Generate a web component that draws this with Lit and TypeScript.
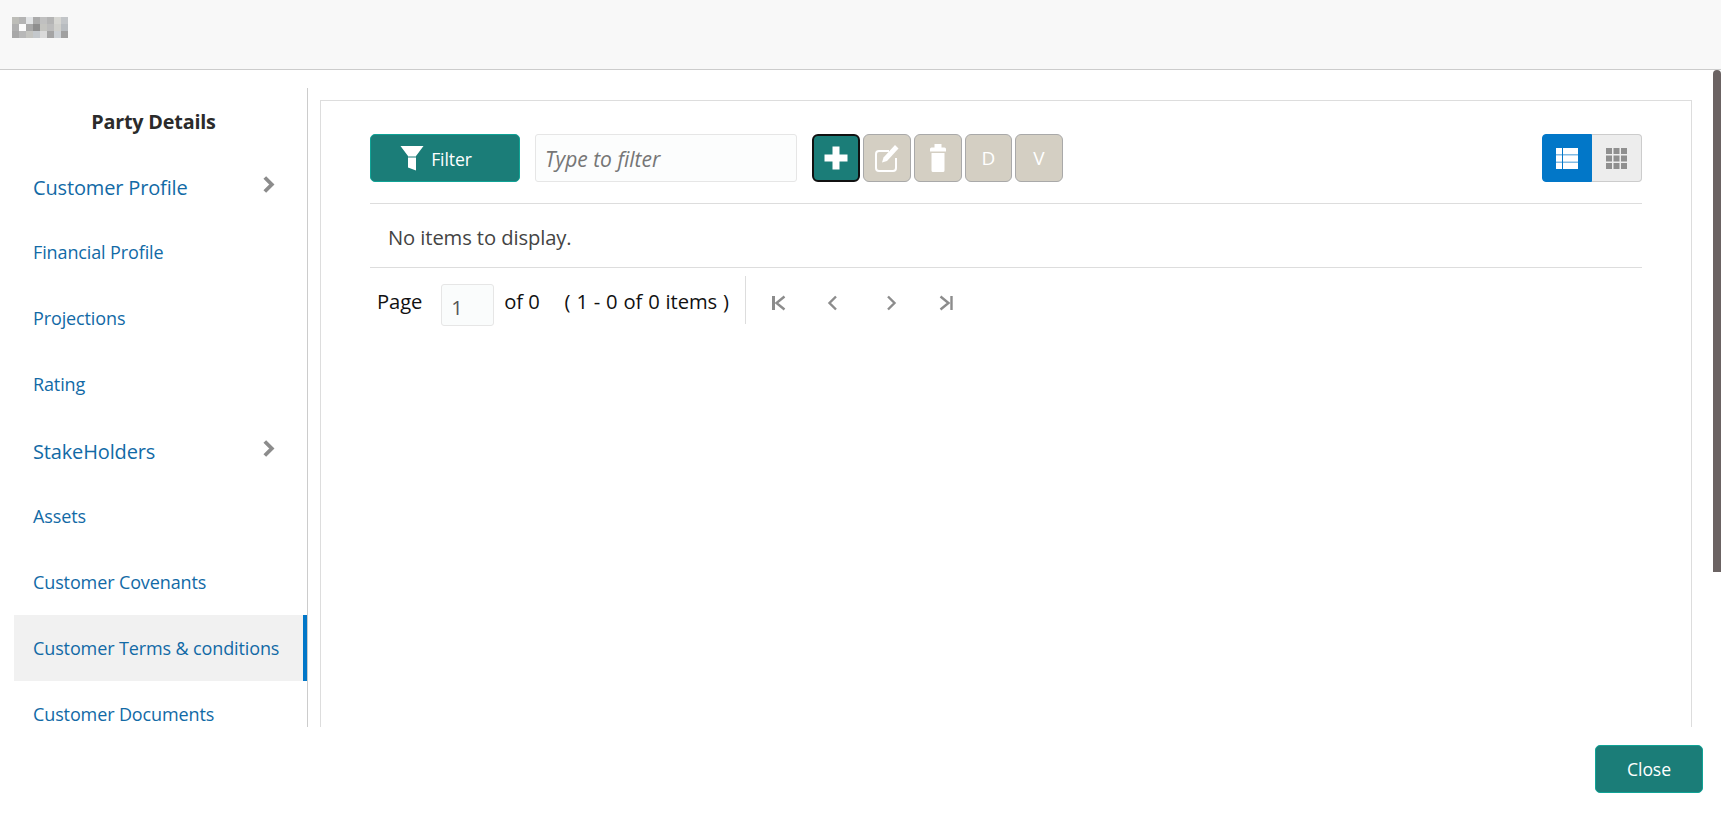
import { LitElement, html, css, svg } from "lit";
import { customElement } from "lit/decorators.js";

const LOGO = [
  "#bdbdb8","#b4b4b4","#e2e4e6","#ababab","#c0c0c0","#b4b4b4","#d6d6d2","#c2c5c8",
  "#b0b0b0","#fbfbfb","#a8a8a8","#8e8e8e","#c4c4c0","#bcbcbc","#d0d0cc","#b8bcc0",
  "#a8a8a8","#b8b8b8","#c4c4c0","#c4c8cc","#dadada","#a4a4a4","#ccd0d4","#a0a0a0",
];

const NAV: { label: string; big?: boolean; active?: boolean }[] = [
  { label: "Customer Profile", big: true },
  { label: "Financial Profile" },
  { label: "Projections" },
  { label: "Rating" },
  { label: "StakeHolders", big: true },
  { label: "Assets" },
  { label: "Customer Covenants" },
  { label: "Customer Terms & conditions", active: true },
  { label: "Customer Documents" },
];

const chevron = svg`<svg class="chev" viewBox="0 0 13 19" width="13" height="19"><path d="M2.800 2.500 9.800 9.500 2.800 16.500" fill="none" stroke="#8c8c8c" stroke-width="3.800"/></svg>`;

@customElement("app-root")
export class AppRoot extends LitElement {
  static styles = css`
    :host { display: block; position: relative; width: 100%; height: 815px; overflow: hidden; background: #fff;
      font-family: "Open Sans", "Noto Sans", sans-serif; color: #333; }
    .top { background: #f8f8f8; border-bottom: 1px solid #ccc; padding: 17px 0 0 12px; box-sizing: border-box; height: 70px; }
    .logo { display: grid; grid-template-columns: repeat(8, 7px); grid-auto-rows: 7px; width: 56px; }
    .body { display: flex; height: 657px; padding: 18px 29px 0 14px; overflow: hidden; box-sizing: border-box; }
    .side { width: 294px; flex: none; border-right: 1px solid #ccc; box-sizing: border-box; overflow: hidden; }
    .side h2 { margin: 0; height: 65px; display: flex; align-items: center; justify-content: center; font-size: 19.8px; font-weight: 700; color: #2b2b2b; letter-spacing: -0.2px; padding: 2px 14px 0 0; box-sizing: border-box; }
    .item { height: 66px; display: flex; align-items: center; justify-content: space-between; padding: 0 32px 0 19px; font-size: 18px; color: #126aa6; box-sizing: border-box; letter-spacing: -0.12px; white-space: nowrap; }
    .item.big { font-size: 20px; letter-spacing: -0.15px; }
    .item.big span { padding-top: 2px; }
    .item.big .chev { margin-top: -3px; }
    .item.active { background: #f1f1f1; border-right: 4px solid #0277c8; padding-right: 0; }
    .panel { flex: 1; margin: 12px 0 0 12px; border: 1px solid #ddd; border-bottom: 0; padding: 33px 49px 0 49px; box-sizing: border-box; height: 700px; }
    .tools { display: flex; align-items: stretch; height: 48px; }
    button { font: inherit; box-sizing: border-box; padding: 0; display: inline-flex; align-items: center; justify-content: center; cursor: pointer; }
    .filter { width: 150px; background: #1b7d78; border: 1px solid #10a396; border-radius: 5px; color: #fff; font-size: 17.6px; gap: 7px; letter-spacing: -0.1px; padding: 1px 18px 0 0; }
    .search { width: 262px; margin: 0 15px; border: 1px solid #e6e6e6; border-radius: 3px; background: #fcfdfd; display: flex; align-items: center; padding: 2px 0 0 9px; font-size: 21px; font-style: italic; color: #767676; box-sizing: border-box; }
    .ibtns { display: flex; gap: 3px; }
    .ib { width: 48px; height: 48px; border-radius: 6px; background: #d4cfc3; border: 1px solid #a9a9a9; color: #fff; font-size: 19px; }
    .ib.add { background: #1b7d78; border: 2px solid #111; }
    .ib.nar { width: 47px; }
    .spacer { flex: 1; }
    .view { display: flex; }
    .view button { height: 48px; border: 1px solid #ccc; }
    .v1 { width: 50px; background: #0277c8; border-color: #0277c8 !important; border-radius: 4px 0 0 4px; }
    .v2 { width: 50px; background: #ededed; border-left: 0 !important; border-radius: 0 4px 4px 0; }
    .empty { margin-top: 21px; height: 65px; border-top: 1px solid #ddd; border-bottom: 1px solid #ddd; display: flex; align-items: center; padding: 3px 0 0 18px; font-size: 20.2px; color: #444; box-sizing: border-box; letter-spacing: -0.1px; }
    .pager { display: flex; align-items: flex-start; font-size: 20.2px; color: #111; letter-spacing: -0.1px; padding-top: 8px; height: 60px; box-sizing: border-box; }
    .pager .cell { height: 50px; display: flex; align-items: center; }
    .pg { margin-left: 7px; }
    .pinput { width: 53px; height: 42px; margin: 8px 0 0 19px; border: 1px solid #e6e6e6; border-radius: 3px; background: #fafcfc; box-sizing: border-box; display: flex; align-items: center; padding: 4px 0 0 9px; font-size: 20.2px; color: #555; }
    .of { margin-left: 10px; }
    .range { margin-left: 25px; word-spacing: 0.8px; }
    .div { width: 1px; height: 48px; background: #ddd; margin-left: 16px; }
    .navs { display: flex; align-items: center; height: 54px; }
    .nv { width: 16px; height: 18px; flex: none; }
    .n1 { margin-left: 25px; }
    .n2 { margin-left: 38px; }
    .n3 { margin-left: 42px; }
    .n4 { margin-left: 39px; }
    .foot { display: flex; justify-content: flex-end; padding: 18px 18px 0 0; }
    .close { width: 108px; height: 48px; background: #1b7d78; border: 1px solid #10a396; border-radius: 5px; color: #fff; font-size: 17.6px; letter-spacing: -0.1px; }
    .scroll { position: absolute; right: 0; top: 70px; width: 8px; height: 502px; background: #6b6363; border-radius: 4px 4px 0 0; }
  `;

  render() {
    return html`
      <div class="top"><div class="logo">${LOGO.map((c) => html`<span style="background:${c}"></span>`)}</div></div>
      <div class="body">
        <nav class="side">
          <h2>Party Details</h2>
          ${NAV.map((n) => html`<div class="item ${n.big ? "big" : ""} ${n.active ? "active" : ""}"><span>${n.label}</span>${n.big ? chevron : ""}</div>`)}
        </nav>
        <section class="panel">
          <div class="tools">
            <button class="filter">
              <svg width="24" height="25" viewBox="0 0 24 25"><path fill="#fff" d="M0.500 0H23.500L16 10V24.500L8 21.500V10Z"/><path d="M8 11H16" stroke="#1b7d78" stroke-width="1"/></svg>
              Filter
            </button>
            <div class="search">Type to filter</div>
            <div class="ibtns">
              <button class="ib add"><svg width="24" height="24" viewBox="0 0 24 24"><path fill="#fff" d="M8.500 0.500h7v8h8v7h-8v8h-7v-8h-8v-7h8Z"/></svg></button>
              <button class="ib"><svg width="24" height="28" viewBox="0 0 24 28" fill="none" stroke="#fff" stroke-width="2"><path d="M14 7H4a3 3 0 0 0-3 3v14a3 3 0 0 0 3 3h14a3 3 0 0 0 3-3V14"/><path fill="#fff" stroke="none" d="M20 1l3.500 3.500L12 17l-5 1.500L8.500 13.500Z"/></svg></button>
              <button class="ib"><svg width="16" height="28" viewBox="0 0 16 28"><path fill="#fff" d="M4.500 0h7v3.500h3a1.500 1.500 0 0 1 1.500 1.500V7.500H0V5a1.500 1.500 0 0 1 1.500-1.500h3ZM1.500 9h13v17.500a1.500 1.500 0 0 1-1.500 1.500H3a1.500 1.500 0 0 1-1.500-1.500Z"/></svg></button>
              <button class="ib nar">D</button>
              <button class="ib">V</button>
            </div>
            <div class="spacer"></div>
            <div class="view">
              <button class="v1"><svg width="22" height="21" viewBox="0 0 22 21"><path fill="#fff" d="M0 0h6v6.400H0ZM7 0h15v6.400H7ZM0 7.300h6v6.400H0ZM7 7.300h15v6.400H7ZM0 14.600h6v6.400H0ZM7 14.600h15v6.400H7Z"/></svg></button>
              <button class="v2"><svg width="21" height="21" viewBox="0 0 21 21"><path fill="#8f8f8f" d="M0 0h6v6H0ZM7.500 0h6v6h-6ZM15 0h6v6h-6ZM0 7.500h6v6H0ZM7.500 7.500h6v6h-6ZM15 7.500h6v6h-6ZM0 15h6v6H0ZM7.500 15h6v6h-6ZM15 15h6v6h-6Z"/></svg></button>
            </div>
          </div>
          <div class="empty">No items to display.</div>
          <div class="pager">
            <div class="cell pg">Page</div>
            <div class="pinput">1</div>
            <div class="cell of">of 0</div>
            <div class="cell range">( 1 - 0 of 0 items )</div>
            <div class="div"></div>
            <div class="navs">
              <svg class="nv n1" viewBox="0 0 16 18"><path d="M2.500 2V16" stroke="#8c8c8c" stroke-width="3" fill="none"/><path d="M13.500 2.500 5.500 9 13.500 15.500" fill="none" stroke="#8c8c8c" stroke-width="2.400"/></svg>
              <svg class="nv n2" viewBox="0 0 16 18"><path d="M11 2.500 4.500 9 11 15.500" fill="none" stroke="#8c8c8c" stroke-width="2.400"/></svg>
              <svg class="nv n3" viewBox="0 0 16 18"><path d="M5 2.500 11.500 9 5 15.500" fill="none" stroke="#8c8c8c" stroke-width="2.400"/></svg>
              <svg class="nv n4" viewBox="0 0 16 18"><path d="M13.500 2V16" stroke="#8c8c8c" stroke-width="2.400" fill="none"/><path d="M2.500 2.500 10.500 9 2.500 15.500" fill="none" stroke="#8c8c8c" stroke-width="2.400"/></svg>
            </div>
          </div>
        </section>
      </div>
      <div class="foot"><button class="close">Close</button></div>
      <div class="scroll"></div>
    `;
  }
}
